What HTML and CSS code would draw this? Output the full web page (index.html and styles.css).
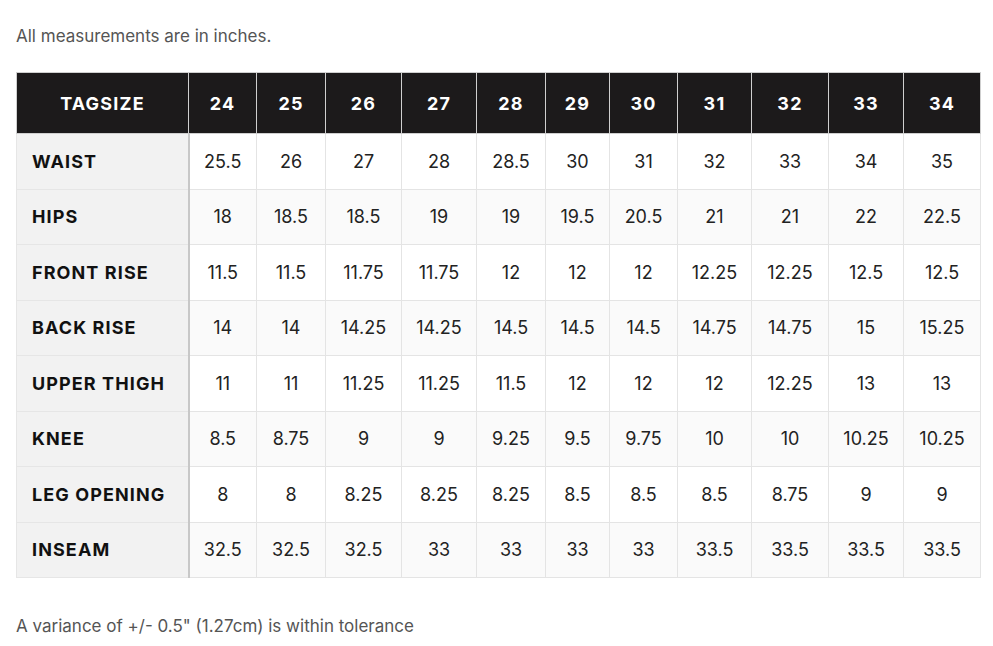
FILE: index.html
```html
<!DOCTYPE html>
<html>
<head>
<meta charset="utf-8">
<link rel="stylesheet" href="styles.css">
</head>
<body>
<div class="page">
  <p class="note">All measurements are in inches.</p>
  <table class="size-table">
    <colgroup>
      <col class="c-label"><col class="w68"><col class="w69"><col class="w76"><col class="w75"><col class="w69"><col class="w64"><col class="w68"><col class="w74"><col class="w77"><col class="w75"><col class="w77">
    </colgroup>
    <thead>
      <tr><th class="head-label">TAGSIZE</th><th>24</th><th>25</th><th>26</th><th>27</th><th>28</th><th>29</th><th>30</th><th>31</th><th>32</th><th>33</th><th>34</th></tr>
    </thead>
    <tbody>
      <tr><th class="row-label">WAIST</th><td>25.5</td><td>26</td><td>27</td><td>28</td><td>28.5</td><td>30</td><td>31</td><td>32</td><td>33</td><td>34</td><td>35</td></tr>
      <tr><th class="row-label">HIPS</th><td>18</td><td>18.5</td><td>18.5</td><td>19</td><td>19</td><td>19.5</td><td>20.5</td><td>21</td><td>21</td><td>22</td><td>22.5</td></tr>
      <tr><th class="row-label">FRONT RISE</th><td>11.5</td><td>11.5</td><td>11.75</td><td>11.75</td><td>12</td><td>12</td><td>12</td><td>12.25</td><td>12.25</td><td>12.5</td><td>12.5</td></tr>
      <tr><th class="row-label">BACK RISE</th><td>14</td><td>14</td><td>14.25</td><td>14.25</td><td>14.5</td><td>14.5</td><td>14.5</td><td>14.75</td><td>14.75</td><td>15</td><td>15.25</td></tr>
      <tr><th class="row-label">UPPER THIGH</th><td>11</td><td>11</td><td>11.25</td><td>11.25</td><td>11.5</td><td>12</td><td>12</td><td>12</td><td>12.25</td><td>13</td><td>13</td></tr>
      <tr><th class="row-label">KNEE</th><td>8.5</td><td>8.75</td><td>9</td><td>9</td><td>9.25</td><td>9.5</td><td>9.75</td><td>10</td><td>10</td><td>10.25</td><td>10.25</td></tr>
      <tr><th class="row-label">LEG OPENING</th><td>8</td><td>8</td><td>8.25</td><td>8.25</td><td>8.25</td><td>8.5</td><td>8.5</td><td>8.5</td><td>8.75</td><td>9</td><td>9</td></tr>
      <tr><th class="row-label">INSEAM</th><td>32.5</td><td>32.5</td><td>32.5</td><td>33</td><td>33</td><td>33</td><td>33</td><td>33.5</td><td>33.5</td><td>33.5</td><td>33.5</td></tr>
    </tbody>
  </table>
  <p class="note tolerance">A variance of +/- 0.5" (1.27cm) is within tolerance</p>
</div>
</body>
</html>
```
FILE: styles.css
```css
html, body {
  margin: 0;
  padding: 0;
  background: #fff;
}
body {
  font-family: Inter, "Noto Sans", sans-serif;
  color: #222;
}
.page {
  padding: 26px 13px 0 16px;
}
.note {
  margin: 0;
  font-size: 17px;
  line-height: 20px;
  color: #555;
}
.tolerance {
  margin-top: 38px;
}
.size-table {
  margin-top: 26px;
  width: 964px;
  table-layout: fixed;
  border-collapse: collapse;
}
.c-label { width: 172px; }
.w64 { width: 64px; }
.w68 { width: 68px; }
.w69 { width: 69px; }
.w74 { width: 74px; }
.w75 { width: 75px; }
.w76 { width: 76px; }
.w77 { width: 77px; }
.size-table thead th {
  background: #1c1a1b;
  color: #fff;
  font-weight: 700;
  font-size: 18px;
  letter-spacing: 1.2px;
  height: 60px;
  padding: 0;
  text-align: center;
  border: 1px solid #cfcfcf;
}
.size-table tbody tr {
  height: 55.5px;
}
.size-table tbody tr:nth-child(even) td {
  background: #fafafa;
}
.size-table td {
  font-size: 18px;
  color: #222;
  text-align: center;
  padding: 0;
  border: 1px solid #e4e4e4;
  background: #fff;
}
.size-table .row-label {
  background: #f2f2f2;
  text-align: left;
  padding: 0 0 0 15px;
  font-size: 18px;
  font-weight: 700;
  letter-spacing: 1.1px;
  color: #111;
  border: 1px solid #e6e6e6;
  border-right: 2px solid #c8c8c8;
}
```
